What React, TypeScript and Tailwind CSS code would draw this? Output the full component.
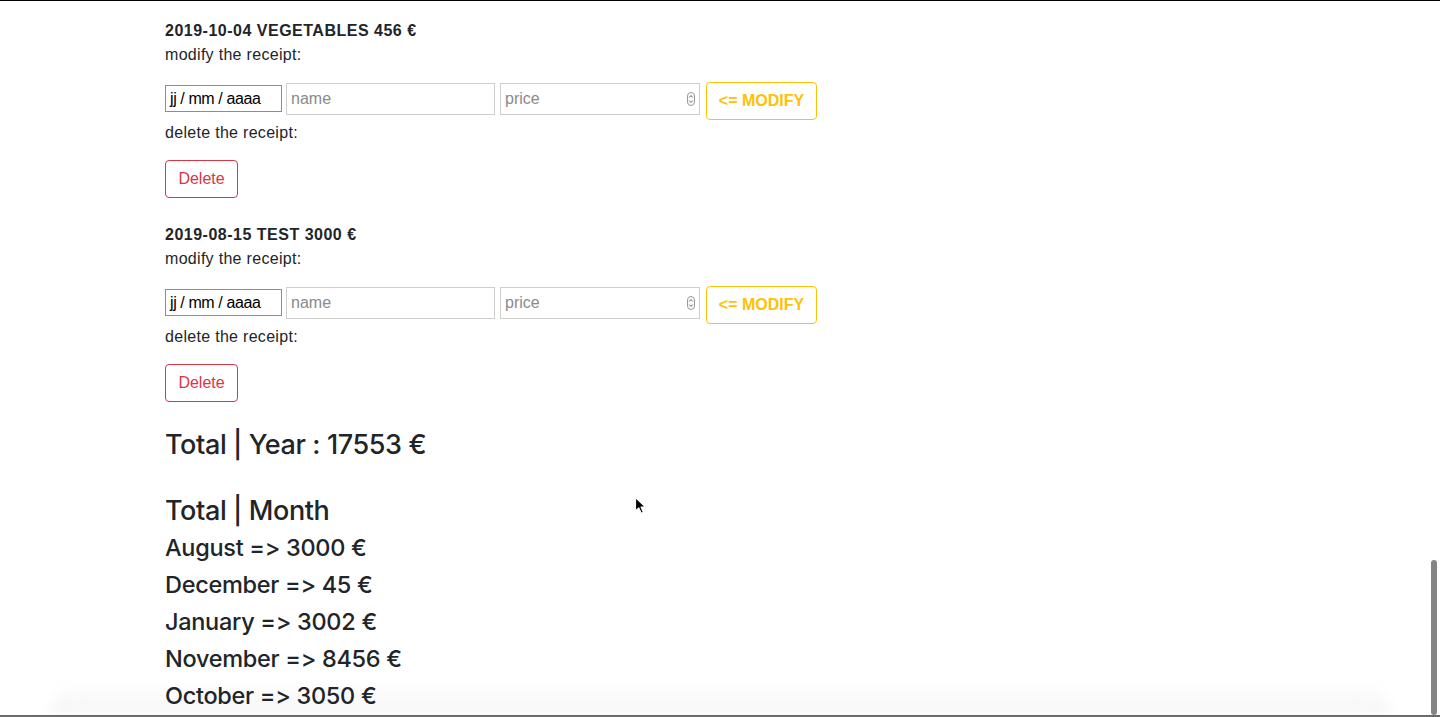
import * as React from "react";

type Receipt = { date: string; name: string; price: number };

const RECEIPTS: Array<Receipt> = [
  { date: "2019-10-04", name: "vegetables", price: 456 },
  { date: "2019-08-15", name: "test", price: 3000 },
];

const MONTHS: Array<[string, number]> = [
  ["August", 3000],
  ["December", 45],
  ["January", 3002],
  ["November", 8456],
  ["October", 3050],
];

const HEAD_FONT = { fontFamily: 'Inter, "Liberation Sans", sans-serif' };

const Spinner = () => (
  <svg width="8" height="14" viewBox="0 0 8 14" className="shrink-0">
    <rect x="0.5" y="0.5" width="7" height="13" rx="3.5" fill="#fafafa" stroke="#9a9a9a" />
    <path d="M2.3 5.4 L4 3.6 L5.7 5.4" fill="none" stroke="#555" strokeWidth="0.9" />
    <path d="M2.3 8.6 L4 10.4 L5.7 8.6" fill="none" stroke="#555" strokeWidth="0.9" />
  </svg>
);

const ReceiptBlock = ({ r }: { r: Receipt }) => (
  <div className="mb-[27px]">
    <h6 className="text-[16px] font-bold uppercase leading-[19px] mb-[3px] tracking-[0.5px]">
      {r.date} {r.name} {r.price} €
    </h6>
    <p className="leading-6 mb-[15px] tracking-[0.3px]">modify the receipt:</p>
    {/* modify form */}
    <div className="flex items-start h-[38px]">
      <div className="mt-[3px] w-[117px] h-[27px] border border-[#8e8e8e] flex items-center pl-[4px] text-black tracking-[-0.4px]">
        jj / mm / aaaa
      </div>
      <div className="mt-[1px] ml-[4px] w-[209px] h-[32px] border border-[#cfcfcf] flex items-center pl-[4px] text-[#8a8a8a]">
        name
      </div>
      <div className="mt-[1px] ml-[5px] w-[200px] h-[32px] border border-[#cfcfcf] flex items-center justify-between pl-[4px] pr-[4px] text-[#8a8a8a]">
        <span>price</span>
        <Spinner />
      </div>
      <button className="ml-[6px] w-[111px] h-[38px] border border-[#ffc107] rounded-[4px] text-[#ffc107] font-bold text-[16px]">
        {"<= MODIFY"}
      </button>
    </div>
    <p className="leading-6 mt-[1px] mb-[15px] tracking-[0.3px]">delete the receipt:</p>
    <button className="w-[73px] h-[38px] border border-[#dc3545] rounded-[4px] text-[#dc3545] text-[16px]">
      Delete
    </button>
  </div>
);

export default function App() {
  return (
    <div
      className="relative w-full h-[717px] overflow-hidden bg-white border-t border-black text-[#212529] text-[16px]"
      style={{ fontFamily: '"Liberation Sans", Arial, sans-serif' }}
    >
      {/* bottom shadow, behind the text */}
      <div className="pointer-events-none absolute left-[50px] right-[50px] bottom-[2px] h-[34px] bg-gradient-to-b from-white to-[#f5f5f5] rounded-t-[50px] blur-[6px]" />

      <div className="relative pl-[165px] pt-[20px]">
        {RECEIPTS.map((r, i) => (
          <ReceiptBlock key={i} r={r} />
        ))}
        {/* totals */}
        <h3 style={HEAD_FONT} className="text-[27px] leading-[34px] font-medium tracking-[-0.4px] mt-[-1px]">Total | Year : 17553 €</h3>
        <h3 style={HEAD_FONT} className="text-[27px] leading-[34px] font-medium tracking-[-0.4px] mt-[32px] mb-[5px]">Total | Month</h3>
        {MONTHS.map(([m, v]) => (
          <h4 key={m} style={HEAD_FONT} className="text-[23.5px] leading-[29px] font-medium tracking-[-0.3px] mb-2">
            {m} =&gt; {v} €
          </h4>
        ))}
      </div>

      <div className="absolute left-0 right-0 bottom-0 h-[2px] bg-[#6b6b6b]" />

      {/* scrollbar */}
      <div className="absolute right-[3px] top-[559px] bottom-[2px] w-[6px] rounded-full bg-[#858585]" />

      {/* cursor */}
      <svg className="absolute left-[634px] top-[495px]" width="14" height="20" viewBox="0 0 14 20">
        <path d="M1.5 1.5 L1.5 15 L4.8 11.9 L7.2 17.3 L9.4 16.3 L7.1 11.1 L11.5 11.1 Z" fill="#000" stroke="#fff" strokeWidth="1.2" strokeLinejoin="round" />
      </svg>
    </div>
  );
}
